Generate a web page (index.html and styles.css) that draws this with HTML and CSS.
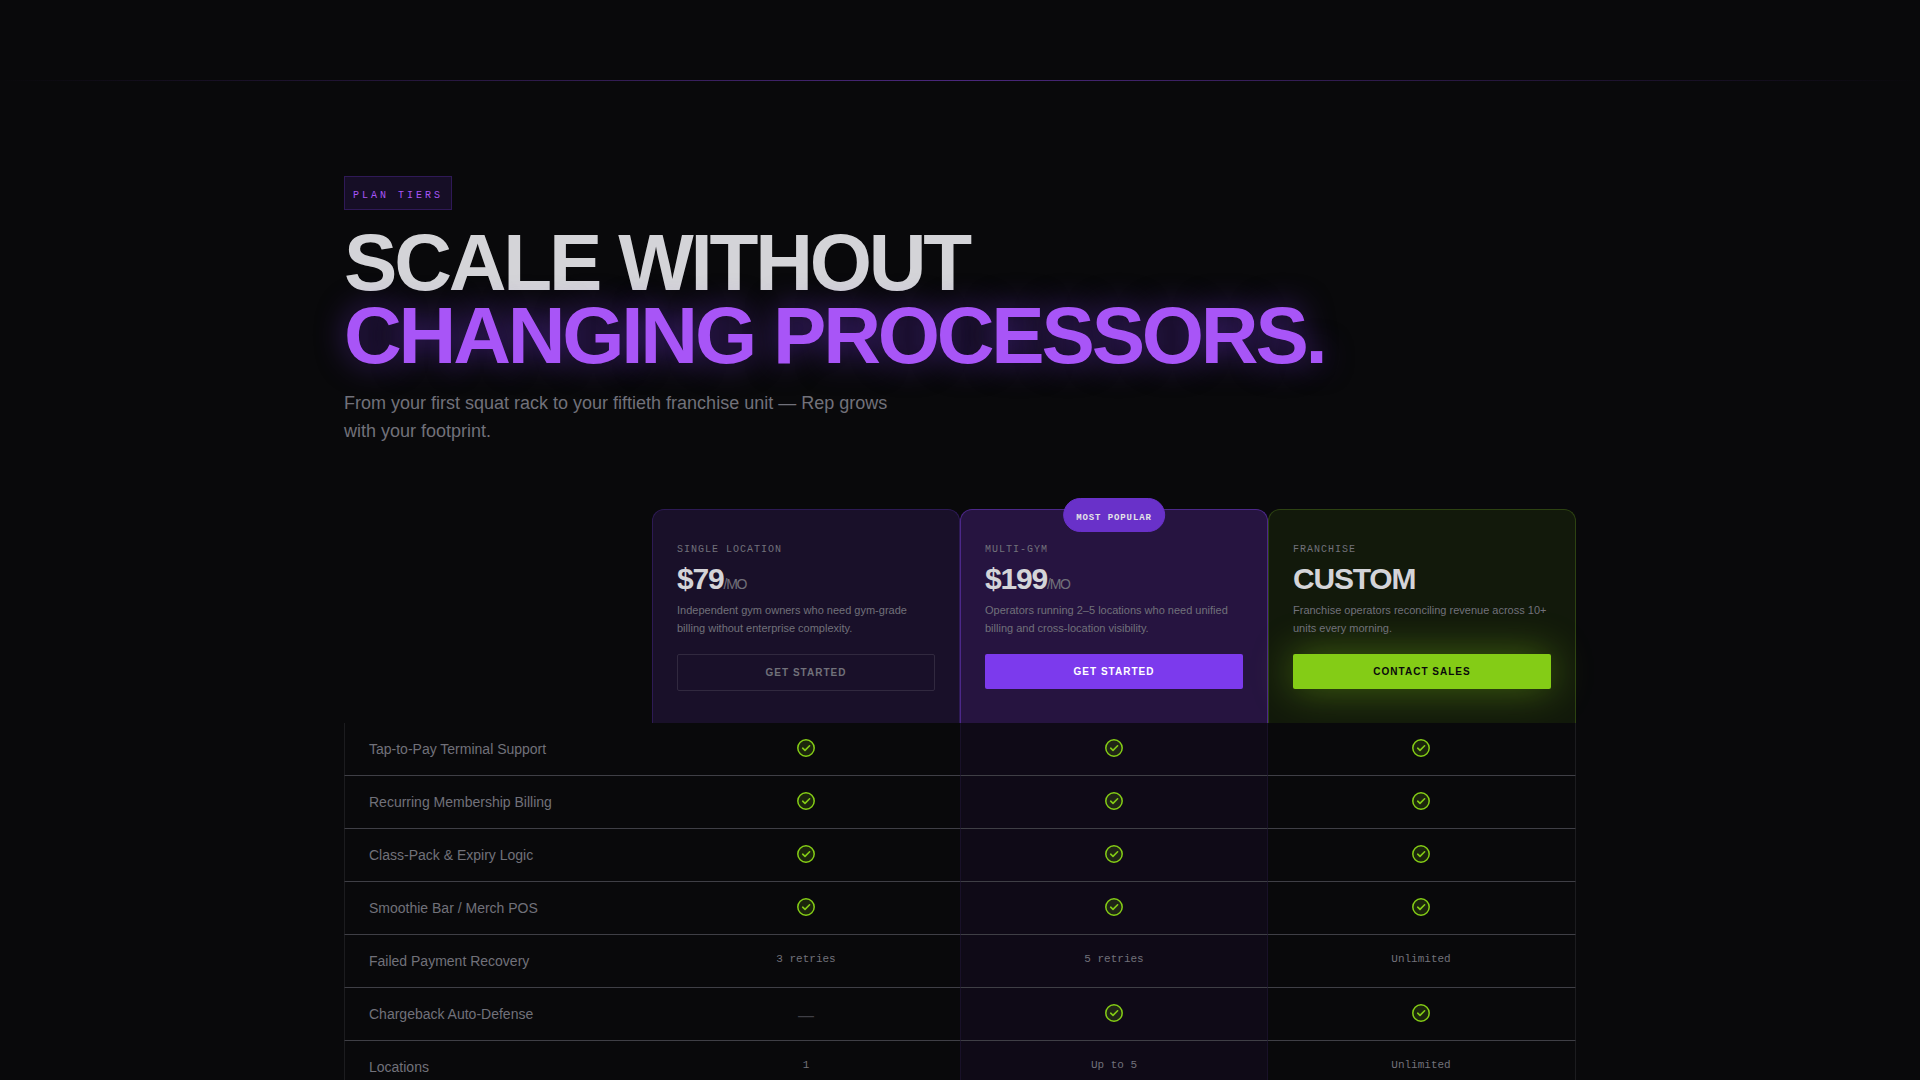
FILE: index.html
```html
<!DOCTYPE html>
<html lang="en">
<head>
    <meta charset="UTF-8">
    <meta name="viewport" content="width=device-width, initial-scale=1.0">
    <title>Rep - Plan Tiers</title>
    <link rel="stylesheet" href="styles.css">
</head>
<body>
    <svg class="sprite" aria-hidden="true">
        <symbol id="check" viewBox="0 0 18 18">
            <circle cx="9" cy="9" r="8.2" fill="#84cc16" fill-opacity="0.15" stroke="#84cc16" stroke-width="1.5"/>
            <path d="M5.7 9.2l2.3 2.2 4.6-4.6" fill="none" stroke="#84cc16" stroke-width="1.6" stroke-linecap="round" stroke-linejoin="round"/>
        </symbol>
    </svg>

    <div class="divider"></div>

    <section class="pricing">
        <span class="tag">PLAN TIERS</span>
        <h1>SCALE WITHOUT<br><span class="glow">CHANGING PROCESSORS.</span></h1>
        <p class="lead">From your first squat rack to your fiftieth franchise unit — Rep grows with your footprint.</p>

        <table class="plans">
            <thead>
                <tr>
                    <td></td>
                    <th scope="col" class="plan plan-single">
                        <div class="plan-name">SINGLE LOCATION</div>
                        <div class="price">$79<span>/MO</span></div>
                        <p>Independent gym owners who need gym-grade billing without enterprise complexity.</p>
                        <button class="btn btn-outline">GET STARTED</button>
                    </th>
                    <th scope="col" class="plan plan-multi">
                        <span class="popular">MOST POPULAR</span>
                        <div class="plan-name">MULTI-GYM</div>
                        <div class="price">$199<span>/MO</span></div>
                        <p>Operators running 2–5 locations who need unified billing and cross-location visibility.</p>
                        <button class="btn btn-primary">GET STARTED</button>
                    </th>
                    <th scope="col" class="plan plan-franchise">
                        <div class="plan-name">FRANCHISE</div>
                        <div class="price">CUSTOM</div>
                        <p>Franchise operators reconciling revenue across 10+ units every morning.</p>
                        <button class="btn btn-lime">CONTACT SALES</button>
                    </th>
                </tr>
            </thead>
            <tbody>
                <tr>
                    <th scope="row">Tap-to-Pay Terminal Support</th>
                    <td><svg class="check" role="img" aria-label="Yes"><use href="#check"/></svg></td>
                    <td><svg class="check" role="img" aria-label="Yes"><use href="#check"/></svg></td>
                    <td><svg class="check" role="img" aria-label="Yes"><use href="#check"/></svg></td>
                </tr>
                <tr>
                    <th scope="row">Recurring Membership Billing</th>
                    <td><svg class="check" role="img" aria-label="Yes"><use href="#check"/></svg></td>
                    <td><svg class="check" role="img" aria-label="Yes"><use href="#check"/></svg></td>
                    <td><svg class="check" role="img" aria-label="Yes"><use href="#check"/></svg></td>
                </tr>
                <tr>
                    <th scope="row">Class-Pack &amp; Expiry Logic</th>
                    <td><svg class="check" role="img" aria-label="Yes"><use href="#check"/></svg></td>
                    <td><svg class="check" role="img" aria-label="Yes"><use href="#check"/></svg></td>
                    <td><svg class="check" role="img" aria-label="Yes"><use href="#check"/></svg></td>
                </tr>
                <tr>
                    <th scope="row">Smoothie Bar / Merch POS</th>
                    <td><svg class="check" role="img" aria-label="Yes"><use href="#check"/></svg></td>
                    <td><svg class="check" role="img" aria-label="Yes"><use href="#check"/></svg></td>
                    <td><svg class="check" role="img" aria-label="Yes"><use href="#check"/></svg></td>
                </tr>
                <tr>
                    <th scope="row">Failed Payment Recovery</th>
                    <td><span class="value">3 retries</span></td>
                    <td><span class="value">5 retries</span></td>
                    <td><span class="value">Unlimited</span></td>
                </tr>
                <tr>
                    <th scope="row">Chargeback Auto-Defense</th>
                    <td><span class="none">—</span></td>
                    <td><svg class="check" role="img" aria-label="Yes"><use href="#check"/></svg></td>
                    <td><svg class="check" role="img" aria-label="Yes"><use href="#check"/></svg></td>
                </tr>
                <tr>
                    <th scope="row">Locations</th>
                    <td><span class="value">1</span></td>
                    <td><span class="value">Up to 5</span></td>
                    <td><span class="value">Unlimited</span></td>
                </tr>
            </tbody>
        </table>
    </section>
</body>
</html>
```
FILE: styles.css
```css
* {
    box-sizing: border-box;
}

body {
    margin: 0;
    padding-top: 80px;
    background: #09090b;
    color: #71717a;
    font-family: "Liberation Sans", Arial, sans-serif;
    overflow-x: hidden;
}

.sprite {
    display: none;
}

.divider {
    height: 1px;
    background: linear-gradient(90deg, transparent, rgba(139, 70, 237, 0.5), transparent);
}

.pricing {
    max-width: 1280px;
    margin: 0 auto;
    padding: 95px 24px 96px;
}

.tag {
    display: inline-block;
    padding: 11px 8px 5px;
    border: 1px solid rgba(124, 58, 237, 0.25);
    background: rgba(124, 58, 237, 0.12);
    color: #a855f7;
    font-family: "Liberation Mono", monospace;
    font-size: 10px;
    line-height: 16px;
    letter-spacing: 3px;
    vertical-align: top;
}

h1 {
    margin: 16px 0 0;
    color: #d4d4d8;
    font-size: 80px;
    font-weight: bold;
    line-height: 73px;
    letter-spacing: -0.04em;
}

.glow {
    color: #a855f7;
    text-shadow: 0 0 30px rgba(124, 58, 237, 0.5);
}

.lead {
    max-width: 576px;
    margin: 17px 0 64px;
    font-size: 18px;
    line-height: 28px;
}

/* Plan comparison */
.plans {
    width: 100%;
    table-layout: fixed;
    border-collapse: separate;
    border-spacing: 0;
}

.plan {
    position: relative;
    height: 214px;
    padding: 32px 24px;
    border: 1px solid;
    border-bottom: none;
    border-radius: 12px 12px 0 0;
    font-weight: normal;
    text-align: left;
    vertical-align: top;
}

.plan-single { background: #191029; border-color: #2d1a54; }
.plan-multi { background: #261440; border-color: #4c2889; }
.plan-franchise { background: #12190b; border-color: #2d4212; }

.popular {
    position: absolute;
    top: -12px;
    left: 50%;
    transform: translateX(-50%);
    padding: 11px 12px 5px;
    border: 1px solid #6931c9;
    border-radius: 17px;
    background: #6931c9;
    color: #e4e4e7;
    font-family: "Liberation Mono", monospace;
    font-size: 9px;
    font-weight: bold;
    line-height: 16px;
    letter-spacing: 0.1em;
    white-space: nowrap;
}

.plan-name {
    font-family: "Liberation Mono", monospace;
    font-size: 10px;
    line-height: 16px;
    letter-spacing: 1px;
}

.price {
    margin-top: 4px;
    color: #d4d4d8;
    font-size: 30px;
    font-weight: bold;
    line-height: 34px;
    letter-spacing: -0.04em;
}

.price span {
    color: #71717a;
    font-size: 14px;
    font-weight: normal;
    line-height: 1;
}

.plan p {
    margin: 5px 0 17px;
    font-size: 11px;
    line-height: 18px;
}

.btn {
    display: block;
    width: 100%;
    padding: 12px 0;
    border: none;
    border-radius: 2px;
    font-family: inherit;
    font-size: 10px;
    font-weight: bold;
    line-height: 11px;
    letter-spacing: 1px;
    cursor: pointer;
}

.btn-outline { border: 1px solid #31293f; background: transparent; color: #71717a; }
.btn-primary { background: #7c3aed; color: white; }
.btn-lime { background: #84cc16; color: #09090b; box-shadow: 0 0 40px rgba(132, 204, 22, 0.45); }

.btn:hover { opacity: 0.8; }

.plans tbody th,
.plans tbody td {
    position: relative;
    height: 53px;
    padding: 0;
    border-bottom: 1px solid #3f3f46;
    background: #09090b;
    vertical-align: middle;
    text-align: center;
}

.plans tbody th {
    padding-left: 24px;
    border-left: 1px solid #1c1c1f;
    font-size: 14px;
    font-weight: normal;
    line-height: 20px;
    text-align: left;
}

.plans tbody td:nth-child(3) {
    border-left: 1px solid #191129;
    border-right: 1px solid #191129;
    background: #0f0a17;
}

.plans tbody td:last-child {
    padding-right: 1px;
    border-right: 1px solid #1c1c1f;
}

.plans tbody td .check {
    display: block;
    width: 18px;
    height: 18px;
    margin: 0 auto 2px;
}

.value {
    display: block;
    padding-bottom: 4px;
    font-family: "Liberation Mono", monospace;
    font-size: 11px;
    line-height: 16px;
}

.none {
    display: block;
    padding-top: 3px;
    color: #3f3f46;
    font-size: 16px;
}
```
